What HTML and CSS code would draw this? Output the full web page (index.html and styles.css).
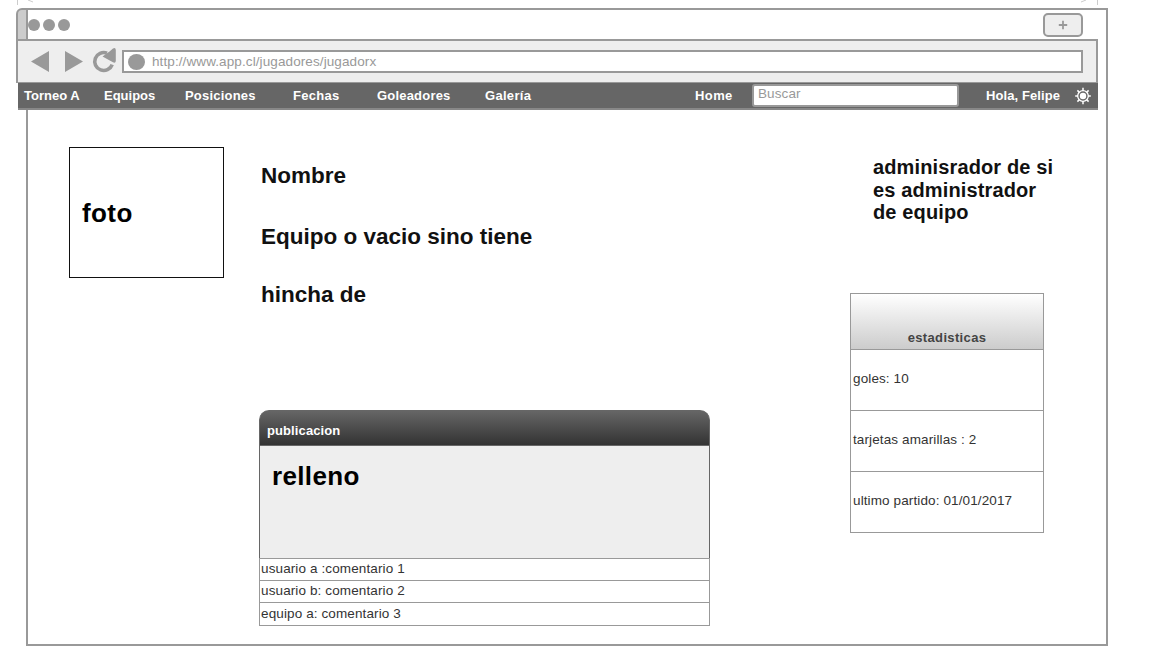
FILE: index.html
```
<!DOCTYPE html>
<html lang="es">
<head>
<meta charset="utf-8">
<title>Jugador</title>
<link rel="stylesheet" href="styles.css">
</head>
<body>
<svg class="ruler" width="1152" height="8" viewBox="0 0 1152 8" fill="none" stroke="#ccc">
  <path d="M17.5 0V5M1097.5 0V5M28 0l5 2M1086 0l-5 2"/>
</svg>
<div class="window">
  <header class="chrome">
    <div class="tabs">
      <div class="tab-edge"></div>
      <div class="dots"><i></i><i></i><i></i></div>
      <div class="new-tab"><svg width="10" height="10" viewBox="0 0 10 10"><path d="M5 .8V9.2M.8 5H9.2" stroke="#999" stroke-width="1.8"/></svg></div>
    </div>
    <div class="toolbar">
      <svg class="controls" width="104" height="40" viewBox="18 41 104 40">
        <path d="M31 61.5L49 51V72ZM83 61.5L65 51V72Z" fill="#999"/>
        <path d="M107 53.1A9 9 0 1 0 112.2 64.6" fill="none" stroke="#999" stroke-width="3.6"/>
        <path d="M102.5 56.5L109.5 51.5L113 48.5Q115.5 46.8 115.8 50V61Q115.5 64 112.5 62Z" fill="#999"/>
      </svg>
      <div class="address"><i></i><span>http://www.app.cl/jugadores/jugadorx</span></div>
    </div>
    <nav class="nav">
      <a class="n1">Torneo A</a><a class="n2">Equipos</a><a class="n3">Posiciones</a><a class="n4">Fechas</a><a class="n5">Goleadores</a><a class="n6">Galería</a>
      <a class="home">Home</a>
      <div class="search">Buscar</div>
      <a class="user">Hola, Felipe</a>
      <svg class="gear" width="16" height="18" viewBox="-8 -9 16 18" fill="none" stroke="#fff">
        <circle r="5.3" stroke-width="1.3"/><circle r="3.2" fill="#fff" stroke="none"/>
        <path stroke-width="1.5" d="M0-5V-8.3M0 5V8.3M-5 0H-7.8M5 0H7.8M-3.6-3.6l-2-2M3.6-3.6l2-2M-3.6 3.6l-2 2M3.6 3.6l2 2"/>
      </svg>
    </nav>
  </header>
  <main class="page">
    <div class="photo">foto</div>
    <section class="profile">
      <h2 class="name">Nombre</h2>
      <h2 class="team">Equipo o vacio sino tiene</h2>
      <h2 class="fan">hincha de</h2>
      <article class="post">
        <div class="post-title">publicacion</div>
        <div class="post-body">relleno</div>
        <div class="comment">usuario a :comentario 1</div>
        <div class="comment">usuario b: comentario 2</div>
        <div class="comment">equipo a: comentario 3</div>
      </article>
    </section>
    <aside class="side">
      <p class="admin">adminisrador de si<br>es administrador<br>de equipo</p>
      <div class="stats">
        <div class="stats-title">estadisticas</div>
        <div class="stat">goles: 10</div>
        <div class="stat cards">tarjetas amarillas : 2</div>
        <div class="stat">ultimo partido: 01/01/2017</div>
      </div>
    </aside>
  </main>
</div>
</body>
</html>
```
FILE: styles.css
```
* { box-sizing: border-box; }
body { margin: 0; height: 657px; overflow: hidden; background: #fff; font: 13px/16px "Liberation Sans", Arial, sans-serif; color: #333; }
.ruler { display: block; }
.window { width: 1082px; height: 638px; margin-left: 26px; border: 2px solid #999; }
.chrome { width: 1082px; margin-left: -12px; }
.tabs { position: relative; display: flex; align-items: center; height: 29px; }
.tab-edge { position: absolute; left: 0; top: -2px; width: 12px; height: 33px; background: #ccc; border: 2px solid #999; border-radius: 6px 0 0 0; }
.dots { display: flex; gap: 3px; margin: 1px auto 0 12px; }
.dots i { width: 12px; height: 12px; border-radius: 50%; background: #999; }
.new-tab { display: flex; align-items: center; justify-content: center; width: 40px; height: 24px; margin-right: 15px; background: #eee; border: 2px solid #999; border-radius: 5px; }
.toolbar { position: relative; display: flex; align-items: flex-start; height: 44px; background: #eee; border: 2px solid #999; border-bottom-width: 1px; }
.controls { flex: none; }
.address { display: flex; align-items: center; width: 961px; height: 23px; margin-top: 9px; background: #fff; border: 2px solid #999; padding-left: 4px; gap: 7px; color: #999; font-size: 13.5px; letter-spacing: .1px; }
.address i { width: 17px; height: 16px; border-radius: 50%; background: #999; }
.nav { display: flex; align-items: center; height: 27px; width: 1080px; margin-left: 2px; padding: 0 0 0 6px; background: #666; border-bottom: 2px solid #888; color: #fff; font-weight: bold; letter-spacing: .2px; white-space: nowrap; }
.nav a { flex: none; }
.n1 { width: 80px; letter-spacing: 0; }
.n2 { width: 81px; letter-spacing: 0; }
.n3 { width: 108px; }
.n4 { width: 84px; letter-spacing: .3px; }
.n5 { width: 108px; }
.n6 { width: 210px; letter-spacing: .3px; }
.home { width: 57px; letter-spacing: .4px; }
.search { width: 207px; height: 23px; margin-right: 27px; padding: 0 4px; background: #fff; border: 2px solid #999; border-radius: 3px; color: #999; font-weight: normal; font-size: 13.5px; letter-spacing: .1px; }
.user { width: 89px; letter-spacing: .1px; }
.gear { flex: none; }
.page { display: flex; padding-left: 41px; color: #111; }
.photo { width: 155px; height: 131px; margin-top: 37px; padding: 51px 0 0 12px; border: 1px solid #111; font-weight: bold; font-size: 26px; line-height: 28px; letter-spacing: .4px; color: #000; }
.profile { width: 451px; margin-left: 35px; }
.profile h2 { margin: 0 0 0 2px; font-size: 22.5px; line-height: 26px; letter-spacing: 0; }
.name { padding-top: 53px; }
.team { padding-top: 35px; }
.fan { padding-top: 32px; }
.post { margin-top: 102px; color: #333; font-size: 13.5px; letter-spacing: .12px; }
.post-title { height: 35px; padding: 12px 7px 0; background: linear-gradient(#666, #333); border: 1px solid #666; border-width: 1px 1px 0; border-radius: 10px 10px 0 0; color: #fff; font-weight: bold; font-size: 13px; letter-spacing: .1px; }
.post-body { height: 113px; padding: 16px 12px; background: #eee; border: 1px solid #666; border-bottom: 0; font-weight: bold; font-size: 26px; line-height: 28px; letter-spacing: .35px; color: #000; }
.comment { height: 22px; padding: 2px 1px 0; border: 1px solid #999; border-bottom: 0; }
.comment:last-child { height: 24px; padding-top: 3px; border-bottom: 1px solid #999; }
.side { margin-left: 140px; width: 220px; }
.admin { margin: 46px 0 0 23px; font-weight: bold; font-size: 20px; line-height: 22.5px; letter-spacing: .13px; }
.stats { width: 194px; margin-top: 69px; border: 1px solid #999; color: #333; font-size: 13.5px; letter-spacing: .12px; }
.stats-title { height: 55px; padding-top: 36px; background: linear-gradient(#fff, #ccc); text-align: center; font-weight: bold; font-size: 13px; letter-spacing: .35px; color: #444; }
.stat { height: 61px; padding: 21px 2px 0; border-top: 1px solid #999; }
.stat:last-child { height: 61px; }
```
